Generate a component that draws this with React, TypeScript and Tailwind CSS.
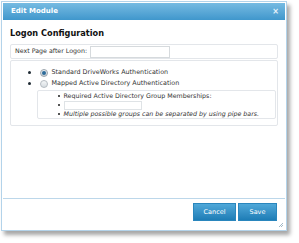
import React from "react";

export default function App() {
  const font = { fontFamily: '"DejaVu Sans", Verdana, sans-serif' };
  return (
    <div className="w-[299px] h-[243px] bg-white relative" style={font}>
      <div className="absolute left-[1px] top-[1px] w-[286px] h-[230px] border border-[#b3d3ea] bg-white p-px flex flex-col shadow-[3px_4px_4px_rgba(0,0,0,0.35)]">
        {/* Title bar */}
        <div className="h-[17px] bg-gradient-to-b from-[#76bbe2] to-[#3f97cc] flex items-center justify-between pl-[8px] pr-[6px]">
          <span className="text-white font-bold text-[7px] leading-none">Edit Module</span>
          <span className="text-[#e6f2fa] font-bold text-[8px] leading-none">×</span>
        </div>
        {/* Body */}
        <div className="flex-1 px-[7px] flex flex-col">
          <div className="mt-[8px] text-[8.2px] font-bold text-[#111] leading-none h-[11px] flex items-center">Logon Configuration</div>
          <div className="mt-[5px] h-[15px] border border-[#e3e6ea] rounded-[2px] flex items-center pl-[4px]">
            <span className="text-[6.3px] text-[#333] leading-none">Next Page after Logon:</span>
            <div className="ml-[3px] w-[80px] h-[12px] border border-[#d6dadd] bg-white"></div>
          </div>
          <div className="mt-[1px] h-[66px] border border-[#e3e6ea] rounded-[2px] pt-[6px]">
            <div className="flex items-center h-[11px] pl-[17px]">
              <span className="w-[2.5px] h-[2.5px] rounded-full bg-[#1f2a33] mr-[9px]"></span>
              <span className="w-[8px] h-[8px] rounded-full border border-[#9aa4ac] bg-gradient-to-b from-[#eef2f5] to-[#c8d0d6] flex items-center justify-center mr-[4px]">
                <span className="w-[4px] h-[4px] rounded-full bg-[#2e6c9a]"></span>
              </span>
              <span className="text-[6.4px] text-[#333] leading-none">Standard DriveWorks Authentication</span>
            </div>
            <div className="flex items-center h-[11px] pl-[17px]">
              <span className="w-[2.5px] h-[2.5px] rounded-full bg-[#1f2a33] mr-[9px]"></span>
              <span className="w-[8px] h-[8px] rounded-full border border-[#b5bcc2] bg-gradient-to-b from-[#f5f7f8] to-[#d7dde1] mr-[4px]"></span>
              <span className="text-[6.4px] text-[#333] leading-none">Mapped Active Directory Authentication</span>
            </div>
            <div className="ml-[26px] mr-[1px] mt-[1px] h-[29px] border border-[#e3e6ea] rounded-[2px] pl-[20px] flex flex-col pt-[1px]">
              <div className="flex items-center h-[9px]">
                <span className="w-[1.5px] h-[1.5px] bg-[#555] mr-[4px]"></span>
                <span className="text-[6.3px] text-[#333] leading-none">Required Active Directory Group Memberships:</span>
              </div>
              <div className="flex items-center h-[10px]">
                <span className="w-[1.5px] h-[1.5px] bg-[#555] mr-[4px]"></span>
                <div className="w-[78px] h-[9px] border border-[#dfe3e6] bg-white"></div>
              </div>
              <div className="flex items-center h-[9px]">
                <span className="w-[1.5px] h-[1.5px] bg-[#555] mr-[4px]"></span>
                <span className="text-[6.3px] italic text-[#333] leading-none">Multiple possible groups can be separated by using pipe bars.</span>
              </div>
            </div>
          </div>
          <div className="flex-1"></div>
        </div>
        {/* Footer */}
        <div className="h-[31px] border-t border-[#bcd7ea] flex items-start justify-end pt-[4px] pr-[8px] gap-[2px] relative">
          <button className="w-[43px] h-[18px] bg-gradient-to-b from-[#4fa8d9] to-[#1d7db6] border border-[#2a86bd] text-white text-[6.5px] leading-none">Cancel</button>
          <button className="w-[39px] h-[18px] bg-gradient-to-b from-[#4fa8d9] to-[#1d7db6] border border-[#2a86bd] text-white text-[6.5px] leading-none">Save</button>
          <svg className="absolute right-[1px] bottom-[1px]" width="6" height="6" viewBox="0 0 6 6">
            <path d="M5 1 L1 5 M5 3 L3 5" stroke="#8aa6b8" strokeWidth="0.8" />
          </svg>
        </div>
      </div>
    </div>
  );
}
